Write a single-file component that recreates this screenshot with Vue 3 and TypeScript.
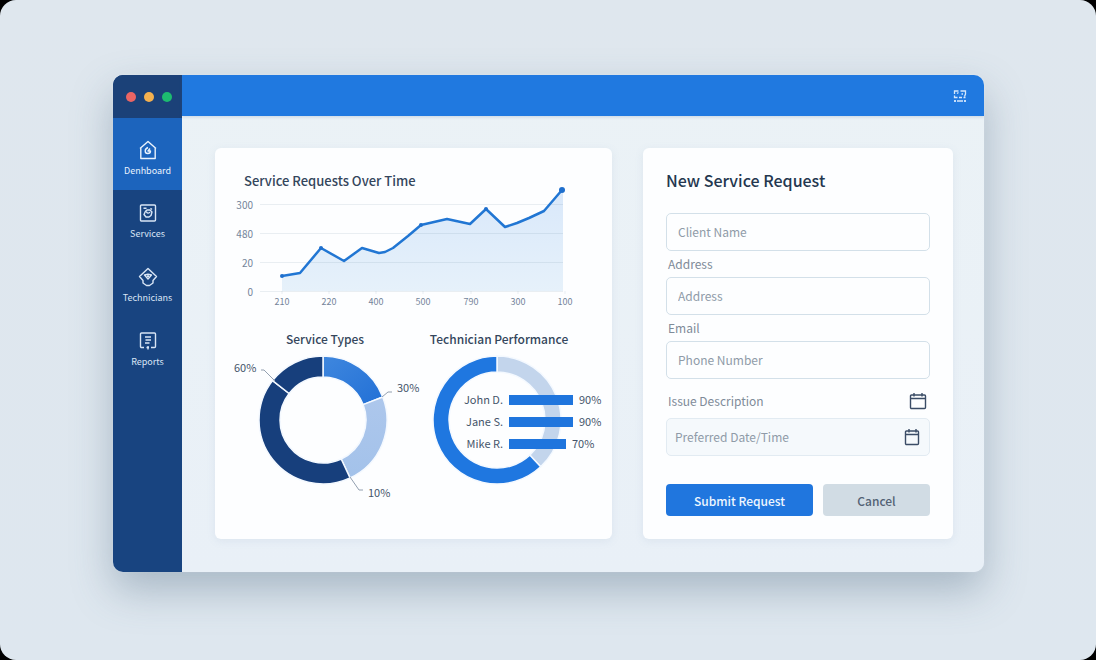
<script setup lang="ts">
import { ref } from 'vue'

interface Point { x: number; y: number; dot?: boolean }
interface Slice { from: number; to: number; fill: string }

const navItems = ['Denhboard', 'Services', 'Technicians', 'Reports']
const active = ref('Denhboard')

const yTicks = [
  { label: '300', y: 14 },
  { label: '480', y: 43 },
  { label: '20', y: 72 },
  { label: '0', y: 101 },
]
const xTicks = [
  { label: '210', x: 67 },
  { label: '220', x: 114 },
  { label: '400', x: 161 },
  { label: '500', x: 208 },
  { label: '790', x: 256 },
  { label: '300', x: 303 },
  { label: '100', x: 350 },
]
const points: Point[] = [
  { x: 67, y: 86, dot: true }, { x: 85, y: 83 }, { x: 106, y: 58, dot: true },
  { x: 129, y: 71 }, { x: 147, y: 58 }, { x: 164, y: 63 }, { x: 170, y: 62 },
  { x: 178, y: 58 }, { x: 193, y: 46 }, { x: 206, y: 35, dot: true },
  { x: 232, y: 29 }, { x: 255, y: 34 }, { x: 271, y: 19, dot: true },
  { x: 290, y: 37 }, { x: 302, y: 33 }, { x: 314, y: 28 }, { x: 329, y: 21 },
  { x: 347, y: 0, dot: true },
]
const line = points.map((p) => `${p.x},${p.y}`).join(' ')
const area = `67,101 ${line} 348,0 348,101`

function ring(cx: number, cy: number, outer: number, inner: number, s: Slice): string {
  const at = (r: number, deg: number) => {
    const a = (deg * Math.PI) / 180
    return `${(cx + r * Math.sin(a)).toFixed(2)} ${(cy - r * Math.cos(a)).toFixed(2)}`
  }
  const large = s.to - s.from > 180 ? 1 : 0
  return `M${at(outer, s.from)}A${outer} ${outer} 0 ${large} 1 ${at(outer, s.to)}` +
    `L${at(inner, s.to)}A${inner} ${inner} 0 ${large} 0 ${at(inner, s.from)}Z`
}

const serviceTypes: Slice[] = [
  { from: 0, to: 69, fill: 'url(#mid-blue)' },
  { from: 69, to: 155, fill: 'url(#pale-blue)' },
  { from: 155, to: 308, fill: '#173f7c' },
  { from: 308, to: 360, fill: '#173f7c' },
]
const performance: Slice[] = [
  { from: 0, to: 137, fill: '#c3d5ec' },
  { from: 137, to: 360, fill: '#1f77e0' },
]
const technicians = [
  { name: 'John D.', value: '90%', y: 52, width: 64 },
  { name: 'Jane S.', value: '90%', y: 74, width: 64 },
  { name: 'Mike R.', value: '70%', y: 96, width: 57 },
]

const client = ref('')
const address = ref('')
const phone = ref('')
const date = ref('')
function reset() {
  client.value = address.value = phone.value = date.value = ''
}
</script>

<template>
  <div class="page">
    <div class="window">
      <aside class="sidebar">
        <div class="lights"><i class="red"></i><i class="amber"></i><i class="green"></i></div>
        <nav>
          <a
            v-for="item in navItems" :key="item" href="#"
            :class="{ active: active === item }" @click.prevent="active = item"
          >
            <svg viewBox="0 0 20 20" width="20" height="20" aria-hidden="true">
              <g v-if="item === 'Denhboard'">
                <path d="M2 8.500 10 1.500l8 7M2.800 7.800V18.500h14.400V7.800" />
                <path d="M10 7.500c-1.800.8-2.800 2-2.800 3.500 0 1.400 1 2.500 2.600 2.500s2.700-1.100 2.700-2.500H10l2-2.500" />
              </g>
              <g v-else-if="item === 'Services'">
                <rect x="2.500" y="2" width="15" height="16" rx="1" />
                <path d="M5.500 5.200h3M12.500 5.200l1.500 1.300M7.500 8.200 9 7h3l2 2-1 3.500-2 1.500H8l-2-2.500zM8.500 8.500c0 1.800 2.500 2.300 3.500.5" />
              </g>
              <g v-else-if="item === 'Technicians'">
                <path d="m10 1.500 8.500 8-3.500 4V16l-3.500 2.500h-3L5 16v-2.500l-3.500-4z" />
                <path d="M6.500 8 10 12l3.500-4-3.500-.8zM9 9.300h2" />
              </g>
              <g v-else>
                <path d="M6 16.500H3.500a1 1 0 0 1-1-1V3a1 1 0 0 1 1-1h13a1 1 0 0 1 1 1v12.500a1 1 0 0 1-1 1H13" />
                <path d="M7 6h6M7.500 9H13M7 12h4.500M8.500 16.500H11M10 15v3.500" />
              </g>
            </svg>
            <span>{{ item }}</span>
          </a>
        </nav>
      </aside>

      <div class="body">
        <header class="topbar">
          <button type="button" aria-label="Toggle view">
            <svg viewBox="0 0 14 14" width="14" height="14" aria-hidden="true">
              <path d="M1.500 5V2h4M7.500 2h5v3l-1 2.500M1.500 6.500v2h3M6 8.500h3M4 4.500l1.500-1M8.500 5H10M10.500 8.500h2M1 12h2M4 12h6M11 12h2M2 11v2M12 11v2" />
            </svg>
          </button>
        </header>

        <main>
          <section class="card charts">
            <h2 class="trend-title">Service Requests Over Time</h2>
            <svg class="chart" viewBox="0 0 397 121" role="img" aria-label="Service requests over time">
              <defs>
                <linearGradient id="area" x1="0" y1="0" x2="0" y2="1">
                  <stop offset="0" stop-color="#d9e8fa" />
                  <stop offset="1" stop-color="#e6f1fa" />
                </linearGradient>
              </defs>
              <polygon :points="area" fill="url(#area)" />
              <g v-for="t in yTicks" :key="t.label">
                <line class="grid" x1="45" x2="348" :y1="t.y + 0.5" :y2="t.y + 0.5" />
                <text class="tick" x="38" :y="t.y + 5" text-anchor="end">{{ t.label }}</text>
              </g>
              <g v-for="t in xTicks" :key="t.x">
                <line class="grid" :x1="t.x" :x2="t.x" y1="101" y2="104" />
                <text class="tick small" :x="t.x" y="115" text-anchor="middle">{{ t.label }}</text>
              </g>
              <polyline class="trend" :points="line" />
              <circle
                v-for="p in points.filter((q) => q.dot)" :key="p.x"
                :cx="p.x" :cy="p.y" :r="p.x > 340 ? 3 : 2" fill="#1f6fcd"
              />
            </svg>

            <div class="rings">
              <figure>
                <figcaption>Service Types</figcaption>
                <svg class="chart" viewBox="0 0 192 160" role="img" aria-label="Service types">
                  <defs>
                    <linearGradient id="mid-blue" x1="0" y1="0" x2="1" y2="1">
                      <stop offset="0" stop-color="#3f87de" />
                      <stop offset="1" stop-color="#2270d6" />
                    </linearGradient>
                    <linearGradient id="pale-blue" x1="0" y1="0" x2="0" y2="1">
                      <stop offset="0" stop-color="#adc7ec" />
                      <stop offset="1" stop-color="#a3c2ea" />
                    </linearGradient>
                  </defs>
                  <path
                    v-for="s in serviceTypes" :key="s.from" class="slice"
                    :d="ring(94, 72, 64, 43, s)" :fill="s.fill"
                  />
                  <path class="leader" d="M32 22h3l11 11M153 49l6-5h4M121 129l9 13h4" />
                  <text class="value" x="5" y="24">60%</text>
                  <text class="value" x="168" y="44">30%</text>
                  <text class="value" x="139" y="149">10%</text>
                </svg>
              </figure>
              <figure>
                <figcaption>Technician Performance</figcaption>
                <svg class="chart" viewBox="0 0 156 160" role="img" aria-label="Technician performance">
                  <path
                    v-for="s in performance" :key="s.from" class="slice"
                    :d="ring(76, 72, 64, 48, s)" :fill="s.fill"
                  />
                  <g v-for="t in technicians" :key="t.name">
                    <text class="value" x="82" :y="t.y + 4" text-anchor="end">{{ t.name }}</text>
                    <rect x="88" :y="t.y - 5" :width="t.width" height="10" fill="#1f75dd" />
                    <text class="value" :x="t.width + 94" :y="t.y + 4">{{ t.value }}</text>
                  </g>
                </svg>
              </figure>
            </div>
          </section>

          <form class="card request" @submit.prevent>
            <h1>New Service Request</h1>
            <input v-model="client" type="text" placeholder="Client Name" aria-label="Client Name" />
            <label for="address">Address</label>
            <input id="address" v-model="address" type="text" placeholder="Address" />
            <label for="contact">Email</label>
            <input id="contact" v-model="phone" type="text" placeholder="Phone Number" />
            <div class="issue">
              <label for="details">Issue Description</label>
              <button type="button" class="calendar" aria-label="Open calendar">
                <svg viewBox="0 0 18 18" width="18" height="18" aria-hidden="true">
                  <path d="M2.500 3h13a1 1 0 0 1 1 1v11.500a1 1 0 0 1-1 1h-13a1 1 0 0 1-1-1V4a1 1 0 0 1 1-1zM1.500 6.500h15M5 1v3.500M13 1v3.500" />
                </svg>
              </button>
            </div>
            <div class="date">
              <input id="details" v-model="date" type="text" placeholder="Preferred Date/Time" />
              <button type="button" class="calendar" aria-label="Pick a date">
                <svg viewBox="0 0 18 18" width="18" height="18" aria-hidden="true">
                  <path d="M3.500 3h11a1 1 0 0 1 1 1v11.500a1 1 0 0 1-1 1h-11a1 1 0 0 1-1-1V4a1 1 0 0 1 1-1zM2.500 6.500h13M6 1v3.500M13 1v3.500" />
                </svg>
              </button>
            </div>
            <div class="actions">
              <button type="submit" class="primary">Submit Request</button>
              <button type="button" class="secondary" @click="reset">Cancel</button>
            </div>
          </form>
        </main>
      </div>
    </div>
  </div>
</template>

<style>
html { background: #000; }
body { margin: 0; }
</style>

<style scoped>
.page, .page * { box-sizing: border-box; }
.page {
  display: flex;
  min-height: 100vh;
  padding: 75px 112px 88px 113px;
  border-radius: 16px;
  background: linear-gradient(180deg, #dfe7ee, #dee7ef);
  color: #34465c;
  font-family: "Noto Sans CJK SC", "Noto Sans", sans-serif;
  font-size: 12px;
}
button, input { font: inherit; }
button { border: 0; padding: 0; background: none; cursor: pointer; }
svg { display: block; }

.window {
  display: flex;
  flex: 1;
  border-radius: 10px;
  overflow: hidden;
  box-shadow: 0 18px 40px rgba(80, 105, 130, 0.38), 0 0 2px #eef4fa;
}

.sidebar {
  display: flex;
  flex-direction: column;
  flex: 0 0 69px;
  background: #184480;
}
.lights {
  display: flex;
  align-items: center;
  gap: 8px;
  height: 43px;
  padding-left: 13px;
  background: #1b4178;
}
.lights i { width: 10px; height: 10px; border-radius: 50%; }
.red { background: #ea6564; }
.amber { background: #f4b04f; }
.green { background: #1dbb70; }
nav { display: flex; flex-direction: column; }
nav a {
  display: flex;
  flex-direction: column;
  align-items: center;
  gap: 3px;
  height: 64px;
  padding-top: 13px;
  color: #d8e5f5;
  font-size: 9px;
  line-height: 16px;
  text-decoration: none;
}
nav a:first-child { height: 72px; padding-top: 22px; }
nav a.active { background: #1c64bd; color: #eaf3fd; }
nav svg { fill: none; stroke: currentColor; stroke-width: 1.4; stroke-linejoin: round; }

.body { display: flex; flex: 1; flex-direction: column; min-width: 0; background: linear-gradient(180deg, #ebf2f6, #e9f0f7); }
.topbar {
  display: flex;
  align-items: center;
  justify-content: flex-end;
  height: 41px;
  padding-right: 17px;
  background: #2079e0;
  box-shadow: 0 1px 3px rgba(60, 100, 150, 0.2);
}
.topbar svg { fill: none; stroke: #d6e8fc; stroke-width: 1.3; }

main {
  display: grid;
  grid-template-columns: 397fr 310fr;
  gap: 31px;
  flex: 1;
  padding: 32px 31px 33px 33px;
}
.card {
  min-width: 0;
  border-radius: 6px;
  background: #fdfeff;
  box-shadow: 0 2px 8px rgba(120, 150, 185, 0.12);
}

.charts { padding-top: 24px; }
.chart { width: 100%; overflow: visible; }
.trend-title {
  margin: 0 0 0 29px;
  font-size: 13px;
  font-weight: 500;
  line-height: 18px;
}
.grid { stroke: #5a7896; stroke-opacity: 0.12; }
.tick { fill: #74849a; font-size: 10px; }
.small { font-size: 9px; }
.trend { fill: none; stroke: #2176d3; stroke-width: 2.5; stroke-linejoin: round; }
.rings {
  display: grid;
  grid-template-columns: 192fr 156fr;
  margin-top: 19px;
  padding: 0 35px 0 14px;
}
figure { margin: 0; }
figcaption {
  display: flex;
  justify-content: center;
  font-size: 12px;
  font-weight: 500;
  line-height: 18px;
  white-space: nowrap;
}
.slice { stroke: #f4f9ff; stroke-width: 1.5; }
.leader { fill: none; stroke: #93a0b0; }
.value { fill: #45556a; font-size: 11px; }

.request { display: flex; flex-direction: column; padding: 22px 23px; }
h1 {
  margin: 0 0 23px;
  color: #24374f;
  font-size: 16px;
  font-weight: 500;
  line-height: 20px;
}
.request label { padding-left: 2px; color: #7f8b99; line-height: 26px; }
input {
  width: 100%;
  height: 38px;
  padding: 0 11px 2px;
  border: 1px solid #d3e0e9;
  border-radius: 5px;
  background: #fdfeff;
  color: #34465c;
  outline-color: #2079e0;
}
input::placeholder { color: #8f9ba8; opacity: 1; }
.issue {
  display: flex;
  align-items: center;
  justify-content: space-between;
  height: 33px;
  margin-top: 6px;
  padding: 0 3px 2px 0;
}
.calendar svg { fill: none; stroke: #3a4c66; stroke-width: 1.4; }
.date {
  display: flex;
  align-items: center;
  height: 38px;
  padding-right: 8px;
  border: 1px solid #e2ebf2;
  border-radius: 5px;
  background: #f5f9fc;
}
.date input { flex: 1; min-width: 0; height: 36px; padding: 0 8px 2px; border: 0; background: none; }
.actions { display: grid; grid-template-columns: 147fr 107fr; gap: 10px; margin-top: 28px; }
.actions button { height: 32px; border-radius: 4px; }
.primary { background: #2076de; color: #eef6ff; font-weight: 500; }
.secondary { background: #d1dce4; color: #536275; font-weight: 500; }
</style>
